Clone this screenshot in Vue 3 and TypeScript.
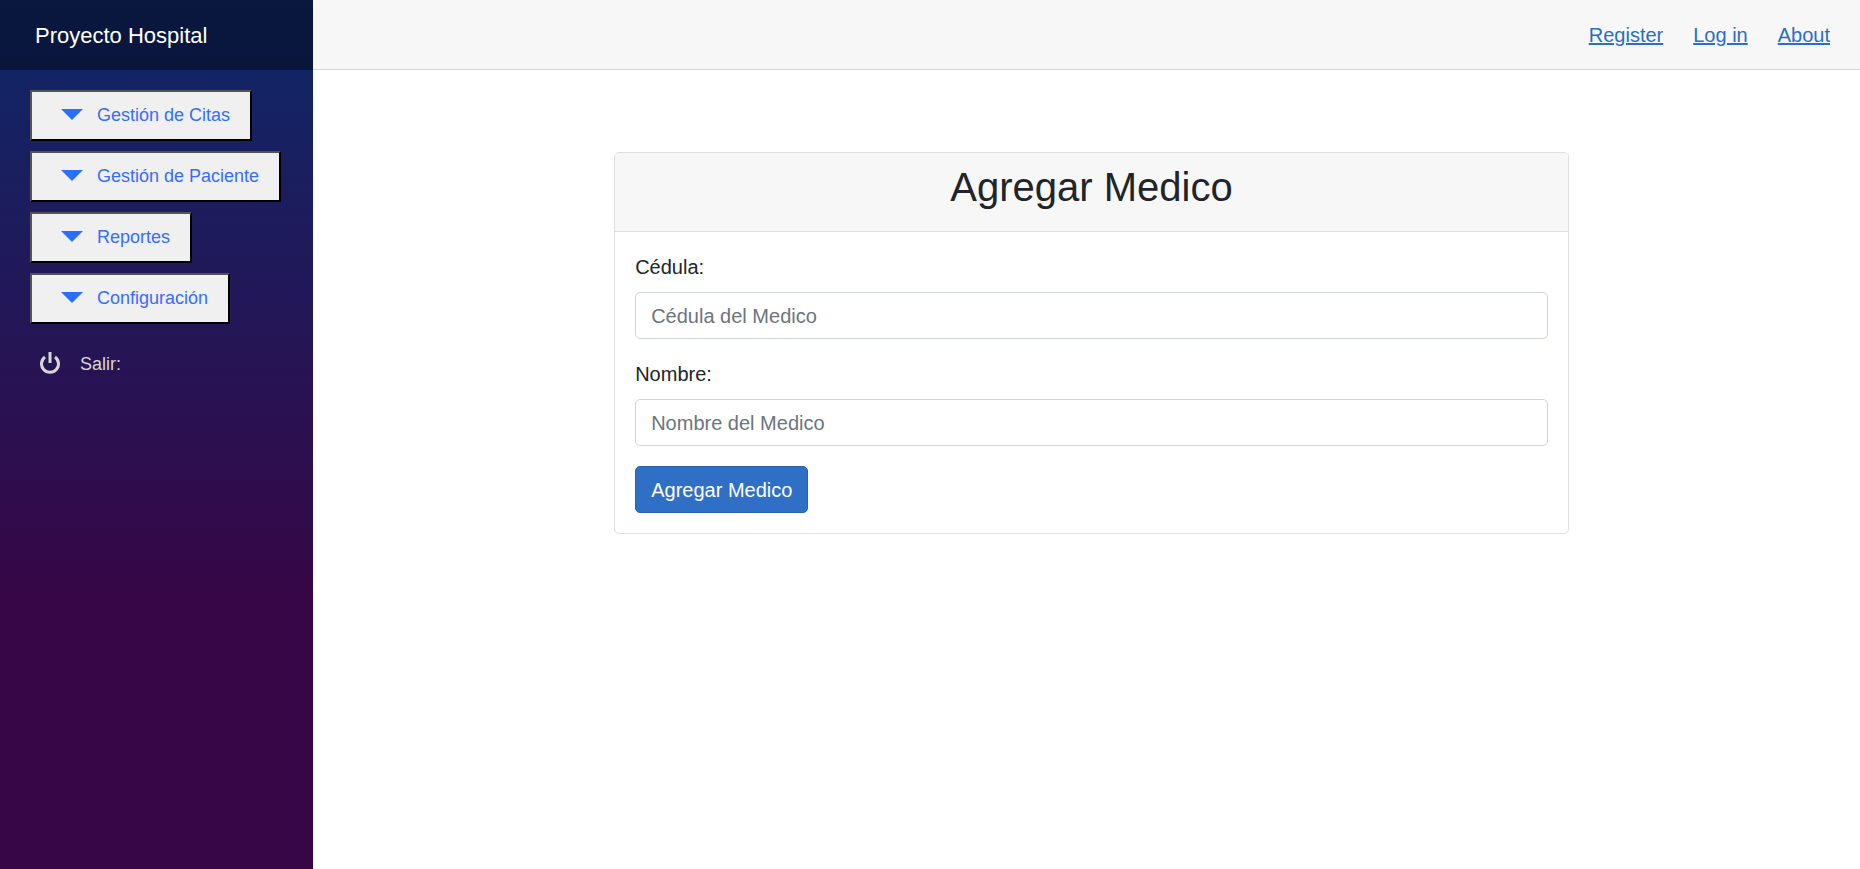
<script setup lang="ts">
import { ref } from 'vue'

const menus = ['Gestión de Citas', 'Gestión de Paciente', 'Reportes', 'Configuración']
const links = ['Register', 'Log in', 'About']
const cedula = ref('')
const nombre = ref('')
</script>

<template>
  <div class="page">
    <aside class="sidebar">
      <div class="brand"><a href="#" class="brand-link">Proyecto Hospital</a></div>
      <nav class="menu" aria-label="Menú">
        <button v-for="menu in menus" :key="menu" type="button" class="menu-button">
          <svg class="caret" viewBox="0 0 22 12" aria-hidden="true"><path d="M0 0H22L11 11Z" /></svg>
          <span>{{ menu }}</span>
        </button>
        <a href="#" class="exit">
          <svg class="power" viewBox="0 0 20 24" aria-hidden="true">
            <path d="M5 5A8.5 8.5 0 1 0 15 5" />
            <path d="M10 0V11" />
          </svg>
          <span>Salir:</span>
        </a>
      </nav>
    </aside>
    <div class="main">
      <header class="topbar">
        <a v-for="link in links" :key="link" href="#" class="top-link">{{ link }}</a>
      </header>
      <main class="content">
        <section class="card">
          <div class="card-header"><h1>Agregar Medico</h1></div>
          <form class="card-body" @submit.prevent>
            <div class="field">
              <label for="cedula">Cédula:</label>
              <input id="cedula" v-model="cedula" type="text" placeholder="Cédula del Medico" />
            </div>
            <div class="field">
              <label for="nombre">Nombre:</label>
              <input id="nombre" v-model="nombre" type="text" placeholder="Nombre del Medico" />
            </div>
            <button type="submit" class="submit">Agregar Medico</button>
          </form>
        </section>
      </main>
    </div>
  </div>
</template>

<style>
body {
  margin: 0;
}
</style>

<style scoped>
.page,
.page * {
  box-sizing: border-box;
}
.page {
  display: flex;
  min-height: 100vh;
  background: #fff;
  color: #212529;
  font-family: "Liberation Sans", Arial, sans-serif;
  font-size: 20px;
  line-height: 30px;
}
.sidebar {
  flex: 0 0 313px;
  background: linear-gradient(180deg, #0e2869 0%, #370646 70%);
}
.brand {
  display: flex;
  align-items: center;
  height: 70px;
  padding: 2px 35px 0;
  background: rgba(0, 0, 0, 0.4);
}
.brand-link {
  color: #fff;
  font-size: 22px;
  text-decoration: none;
}
.menu {
  display: flex;
  flex-direction: column;
  align-items: flex-start;
  gap: 10px;
  padding: 20px 30px;
}
.menu-button {
  display: flex;
  align-items: center;
  gap: 14px;
  height: 51px;
  padding: 0 20px 2px 29px;
  border: 2px outset #000;
  border-radius: 0;
  background: #f0f0f0;
  color: #366dfe;
  font-family: inherit;
  font-size: 18px;
  line-height: 28px;
}
.caret {
  width: 22px;
  height: 12px;
  fill: #2b6fff;
}
.exit {
  display: flex;
  align-items: center;
  gap: 20px;
  height: 60px;
  padding: 0 10px;
  color: #d7d7d7;
  font-size: 18px;
  text-decoration: none;
}
.power {
  width: 20px;
  height: 24px;
  fill: none;
  stroke: #d7d7d7;
  stroke-width: 3;
}
.main {
  flex: 1;
  min-width: 0;
}
.topbar {
  display: flex;
  justify-content: flex-end;
  align-items: center;
  gap: 30px;
  height: 70px;
  padding: 0 30px;
  border-bottom: 1px solid #d6d5d5;
  background: #f7f7f7;
}
.top-link {
  color: #2a6fc4;
  text-decoration-thickness: 2px;
}
.content {
  display: flex;
  justify-content: center;
  padding: 82px 30px 20px 40px;
}
.card {
  flex: 0 0 calc(66.6667% - 30px);
  border: 1px solid #dfdfdf;
  border-radius: 5px;
  background: #fff;
}
.card-header {
  padding: 10px 20px 20px;
  border-bottom: 1px solid #dfdfdf;
  border-radius: 4px 4px 0 0;
  background: #f7f7f7;
  text-align: center;
}
h1 {
  margin: 0;
  font-size: 40px;
  font-weight: 400;
  line-height: 48px;
}
.card-body {
  display: flex;
  flex-direction: column;
  gap: 20px;
  padding: 20px;
}
.field {
  display: flex;
  flex-direction: column;
  gap: 10px;
}
.field input {
  width: 100%;
  height: 47px;
  padding: 2px 15px 0;
  border: 1px solid #ced4da;
  border-radius: 5px;
  background: #fff;
  color: #495057;
  font-family: inherit;
  font-size: 20px;
}
.field input::placeholder {
  color: #6c757d;
  opacity: 1;
}
.submit {
  align-self: flex-start;
  height: 47px;
  padding: 2px 15px 0;
  border: 1px solid #2862ae;
  border-radius: 5px;
  background: #2f6fc6;
  color: #fff;
  font-family: inherit;
  font-size: 20px;
}
</style>
